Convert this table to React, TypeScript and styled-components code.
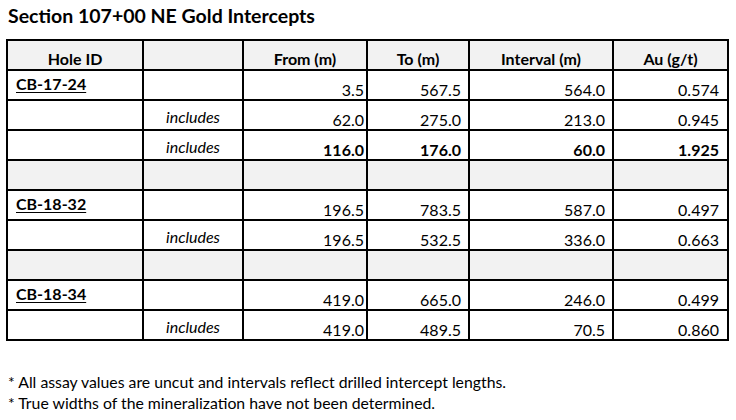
import styled, { createGlobalStyle } from "styled-components";

const GlobalStyle = createGlobalStyle`
  html, body {
    margin: 0;
    padding: 0;
    background: #ffffff;
  }
  body {
    font-family: Lato, "Liberation Sans", sans-serif;
    color: #000000;
  }
`;

type Row = {
  kind: "hole" | "inc" | "gap";
  id?: string;
  values?: string[];
  bold?: boolean;
};

const rows: Row[] = [
  { kind: "hole", id: "CB-17-24", values: ["3.5", "567.5", "564.0", "0.574"] },
  { kind: "inc", values: ["62.0", "275.0", "213.0", "0.945"] },
  { kind: "inc", values: ["116.0", "176.0", "60.0", "1.925"], bold: true },
  { kind: "gap" },
  { kind: "hole", id: "CB-18-32", values: ["196.5", "783.5", "587.0", "0.497"] },
  { kind: "inc", values: ["196.5", "532.5", "336.0", "0.663"] },
  { kind: "gap" },
  { kind: "hole", id: "CB-18-34", values: ["419.0", "665.0", "246.0", "0.499"] },
  { kind: "inc", values: ["419.0", "489.5", "70.5", "0.860"] },
];

const headers = ["Hole ID", "", "From (m)", "To (m)", "Interval (m)", "Au (g/t)"];
// right padding of each number column, as in the sheet
const numPad = [2, 7, 7, 8];

function App() {
  return (
    <Page>
      <GlobalStyle />
      <Title>Section 107+00 NE Gold Intercepts</Title>
      <Grid>
        {headers.map((h, i) => (
          <HeadCell key={"h" + i}>{h}</HeadCell>
        ))}
        {rows.map((row, r) => {
          if (row.kind === "gap") {
            return [0, 1, 2, 3, 4, 5].map((c) => <Cell key={r + "-" + c} $shade />);
          }
          return [
            <IdCell key={r + "-id"}>{row.id && <HoleId>{row.id}</HoleId>}</IdCell>,
            <IncCell key={r + "-inc"}>{row.kind === "inc" ? "includes" : ""}</IncCell>,
            ...(row.values || []).map((v, c) => (
              <NumCell key={r + "-" + c} $bold={row.bold} $pad={numPad[c]}>
                {v}
              </NumCell>
            )),
          ];
        })}
      </Grid>
      <Notes>
        <Note>* All assay values are uncut and intervals reflect drilled intercept lengths.</Note>
        <Note>* True widths of the mineralization have not been determined.</Note>
      </Notes>
    </Page>
  );
}

export default App;

const Page = styled.div`
  width: 736px;
  height: 420px;
  padding: 4px 0 0 8px;
  box-sizing: border-box;
`;

const Title = styled.h1`
  margin: 0;
  font-size: 19.5px;
  font-weight: 700;
  line-height: 24px;
`;

const Grid = styled.div`
  display: grid;
  grid-template-columns: 136px 100px 124px 102px 144px 115px;
  grid-auto-rows: 30px;
  width: max-content;
  margin: 11px 0 0 -2px;
  border-left: 2px solid #000;
  border-top: 2px solid #000;
  font-size: 16px;
`;

const Cell = styled.div<{ $shade?: boolean }>`
  box-sizing: border-box;
  border-right: 2px solid #000;
  border-bottom: 2px solid #000;
  background: ${(p) => (p.$shade ? "#f2f2f2" : "#ffffff")};
  display: flex;
  min-width: 0;
  white-space: nowrap;
`;

const HeadCell = styled(Cell)`
  background: #f2f2f2;
  font-weight: 700;
  justify-content: center;
  align-items: flex-end;
  padding-bottom: 1px;
`;

const IdCell = styled(Cell)`
  align-items: center;
  padding: 0 0 4px 8px;
`;

const HoleId = styled.span`
  font-weight: 700;
  text-decoration: underline;
  text-underline-offset: 2px;
`;

const IncCell = styled(Cell)`
  justify-content: center;
  align-items: center;
  font-style: italic;
  padding-top: 2px;
`;

const NumCell = styled(Cell)<{ $bold?: boolean; $pad: number }>`
  justify-content: flex-end;
  align-items: flex-end;
  padding: 0 ${(p) => p.$pad}px 0 0;
  font-weight: ${(p) => (p.$bold ? 700 : 400)};
`;

const Notes = styled.div`
  margin-top: 30px;
  display: flex;
  flex-direction: column;
`;

const Note = styled.div`
  font-size: 15.8px;
  line-height: 21px;
`;
